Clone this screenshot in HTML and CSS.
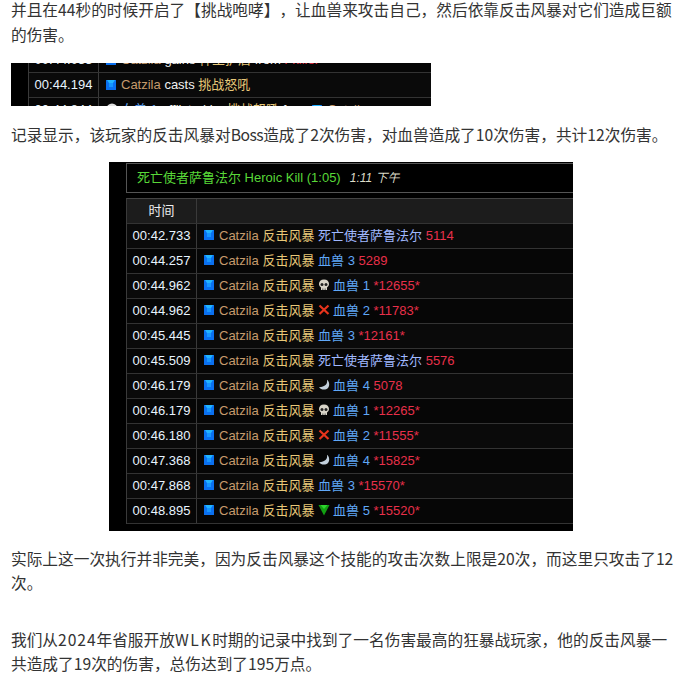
FILE: index.html
```html
<!DOCTYPE html>
<html lang="zh">
<head>
<meta charset="utf-8">
<title>反击风暴</title>
<link rel="stylesheet" href="styles.css">
</head>
<body>
<svg class="defs" width="0" height="0" aria-hidden="true">
  <symbol id="mark" viewBox="0 0 10 10"><rect width="10" height="10" fill="#0a70f0"/><path d="M1 0h8L7 3H3z" fill="#22b4ff"/><rect x="3" y="3" width="4" height="4" fill="#1496ff"/></symbol>
  <symbol id="skull" viewBox="0 0 12 12"><path d="M6 .5C2.800.5 1 2.500 1 5c0 1.600.8 2.800 2 3.400V11h6V8.400c1.200-.6 2-1.800 2-3.400C11 2.500 9.200.5 6 .5z" fill="#d8d4c8"/><circle cx="4" cy="5.500" r="1.500" fill="#222"/><circle cx="8" cy="5.500" r="1.500" fill="#222"/><path d="M4.500 9.500v1.500M6 9.500v1.500M7.500 9.500v1.500" stroke="#444" stroke-width=".6"/></symbol>
  <symbol id="cross" viewBox="0 0 12 12"><path d="M1.500 1.500l9 8.500M10.500 1.500l-9 8.500" stroke="#e8341c" stroke-width="2.200" fill="none"/></symbol>
  <symbol id="moon" viewBox="0 0 12 12"><path d="M9 .8C9.800 5 7 8 1 8.200 3 11 7.500 11.500 10 9c2-2.300 1.500-6.200-1-8.200z" fill="#c3d0dc"/></symbol>
  <symbol id="tri" viewBox="0 0 12 12"><path d="M.5 1h11L6 11.500z" fill="#12a012"/><path d="M2.500 1h7L6 5z" fill="#2fd62f"/></symbol>
  <symbol id="dot" viewBox="0 0 12 12"><circle cx="6" cy="6" r="5.500" fill="#e0e0e0"/></symbol>
</svg>
<main class="article">
  <p class="para">并且在44秒的时候开启了【挑战咆哮】，让血兽来攻击自己，然后依靠反击风暴对它们造成巨额的伤害。</p>

  <figure class="shot shot-small">
    <div class="log log-small">
      <div class="row">
        <div class="time">00:44.033</div>
        <div class="event"><svg class="mark"><use href="#mark"/></svg><span class="player">Catzila</span> <span class="plain">gains</span> <span class="spell">神圣护盾</span> <span class="plain">from</span> <span class="dmg">Fkiller</span></div>
      </div>
      <div class="row">
        <div class="time">00:44.194</div>
        <div class="event"><svg class="mark"><use href="#mark"/></svg><span class="player">Catzila</span> <span class="plain">casts</span> <span class="spell">挑战怒吼</span></div>
      </div>
      <div class="row">
        <div class="time">00:44.844</div>
        <div class="event"><svg class="raid"><use href="#dot"/></svg><span class="mob">血兽 1</span> <span class="plain">afflicted by</span> <span class="spell">挑战怒吼</span> <span class="plain">from</span> <svg class="mark"><use href="#mark"/></svg><span class="player">Catzila</span></div>
      </div>
    </div>
  </figure>

  <p class="para para-mid">记录显示，该玩家的反击风暴对<span class="tight">Boss</span>造成了2次伤害，对血兽造成了10次伤害，共计12次伤害。</p>

  <figure class="shot shot-large">
    <div class="log log-large">
      <div class="fight"><span class="fight-name">死亡使者萨鲁法尔 Heroic Kill (1:05)</span><em class="fight-time">1:11 下午</em></div>
      <div class="table">
        <div class="row row-head"><div class="time">时间</div><div class="event"></div></div>
        <div class="row"><div class="time">00:42.733</div><div class="event"><svg class="mark"><use href="#mark"/></svg><span class="player">Catzila</span> <span class="spell">反击风暴</span> <span class="boss">死亡使者萨鲁法尔</span> <span class="dmg">5114</span></div></div>
        <div class="row"><div class="time">00:44.257</div><div class="event"><svg class="mark"><use href="#mark"/></svg><span class="player">Catzila</span> <span class="spell">反击风暴</span> <span class="mob">血兽 3</span> <span class="dmg">5289</span></div></div>
        <div class="row"><div class="time">00:44.962</div><div class="event"><svg class="mark"><use href="#mark"/></svg><span class="player">Catzila</span> <span class="spell">反击风暴</span> <svg class="raid"><use href="#skull"/></svg><span class="mob">血兽 1</span> <span class="dmg">*12655*</span></div></div>
        <div class="row"><div class="time">00:44.962</div><div class="event"><svg class="mark"><use href="#mark"/></svg><span class="player">Catzila</span> <span class="spell">反击风暴</span> <svg class="raid"><use href="#cross"/></svg><span class="mob">血兽 2</span> <span class="dmg">*11783*</span></div></div>
        <div class="row"><div class="time">00:45.445</div><div class="event"><svg class="mark"><use href="#mark"/></svg><span class="player">Catzila</span> <span class="spell">反击风暴</span> <span class="mob">血兽 3</span> <span class="dmg">*12161*</span></div></div>
        <div class="row"><div class="time">00:45.509</div><div class="event"><svg class="mark"><use href="#mark"/></svg><span class="player">Catzila</span> <span class="spell">反击风暴</span> <span class="boss">死亡使者萨鲁法尔</span> <span class="dmg">5576</span></div></div>
        <div class="row"><div class="time">00:46.179</div><div class="event"><svg class="mark"><use href="#mark"/></svg><span class="player">Catzila</span> <span class="spell">反击风暴</span> <svg class="raid"><use href="#moon"/></svg><span class="mob">血兽 4</span> <span class="dmg">5078</span></div></div>
        <div class="row"><div class="time">00:46.179</div><div class="event"><svg class="mark"><use href="#mark"/></svg><span class="player">Catzila</span> <span class="spell">反击风暴</span> <svg class="raid"><use href="#skull"/></svg><span class="mob">血兽 1</span> <span class="dmg">*12265*</span></div></div>
        <div class="row"><div class="time">00:46.180</div><div class="event"><svg class="mark"><use href="#mark"/></svg><span class="player">Catzila</span> <span class="spell">反击风暴</span> <svg class="raid"><use href="#cross"/></svg><span class="mob">血兽 2</span> <span class="dmg">*11555*</span></div></div>
        <div class="row"><div class="time">00:47.368</div><div class="event"><svg class="mark"><use href="#mark"/></svg><span class="player">Catzila</span> <span class="spell">反击风暴</span> <svg class="raid"><use href="#moon"/></svg><span class="mob">血兽 4</span> <span class="dmg">*15825*</span></div></div>
        <div class="row"><div class="time">00:47.868</div><div class="event"><svg class="mark"><use href="#mark"/></svg><span class="player">Catzila</span> <span class="spell">反击风暴</span> <span class="mob">血兽 3</span> <span class="dmg">*15570*</span></div></div>
        <div class="row"><div class="time">00:48.895</div><div class="event"><svg class="mark"><use href="#mark"/></svg><span class="player">Catzila</span> <span class="spell">反击风暴</span> <svg class="raid"><use href="#tri"/></svg><span class="mob">血兽 5</span> <span class="dmg">*15520*</span></div></div>
      </div>
    </div>
  </figure>

  <p class="para para-after">实际上这一次执行并非完美，因为反击风暴这个技能的攻击次数上限是20次，而这里只攻击了12次。</p>
  <p class="para para-last">我们从<span class="wide-num">2024</span>年省服开放<span class="wide-lat">WLK</span>时期的记录中找到了一名伤害最高的狂暴战玩家，他的反击风暴一共造成了19次的伤害，总伤达到了195万点。</p>
</main>
</body>
</html>
```
FILE: styles.css
```css
* { box-sizing: border-box; }
html, body { margin: 0; padding: 0; background: #fff; }
body { height: 674px; overflow: hidden; }
.defs { position: absolute; }
.article {
  width: 675px;
  margin-top: -2px;
  padding: 0 0 0 11px;
  font-family: "Noto Sans CJK SC", "Liberation Sans", sans-serif;
  font-size: 15.7px;
  line-height: 24.5px;
  color: #333;
  text-spacing-trim: space-all;
}
.para { margin: 0; }
.tight { letter-spacing: -0.5px; }
.wide-num { letter-spacing: 0.9px; }
.wide-lat { letter-spacing: 1.6px; }
.shot { margin: 0; background: #000; overflow: hidden; }
.shot-small { width: 420px; height: 43px; margin-top: 16px; }
.para-mid { margin-top: 17px; }
.shot-large { width: 464px; height: 369px; margin: 14px 0 0 98px; padding-top: 1px; }
.para-after { margin-top: 16px; }
.para-last { margin-top: 32px; }

.log {
  font-family: "Liberation Sans", "Noto Sans CJK SC", sans-serif;
  font-size: 13px;
  line-height: 24px;
  color: #fff;
}
.log-small { margin: -15px 0 0 17px; border-left: 1px solid #3a3a3a; }
.log-large { padding-left: 17px; }
.fight {
  height: 30px;
  display: flex;
  align-items: center;
  gap: 9px;
  padding-left: 10px;
  border: 1px solid #555;
  border-right: 0;
}
.fight-name { color: #58d838; }
.fight-time { color: #dcdcc8; font-size: 12px; }
.table { margin-top: 5px; border-top: 1px solid #444; border-left: 1px solid #3a3a3a; }
.row { display: flex; height: 25px; background: #0a0a0a; border-bottom: 1px solid #333; }
.row:nth-child(odd) { background: #060606; }
.row.row-head { background: #1c1c1c; }
.row-head .time { color: #eee; }
.time { flex: 0 0 70px; text-align: center; border-right: 1px solid #3a3a3a; color: #e8f4ff; }
.event { flex: 1; padding-left: 7px; white-space: nowrap; min-width: 0; overflow: hidden; }
.mark { display: inline-block; width: 10px; height: 10px; margin: 0 5px 0 0; vertical-align: -0.5px; }
.raid { display: inline-block; width: 12px; height: 12px; margin: 0 3px 0 0; vertical-align: -1px; }
.player { color: #c69b6d; }
.spell { color: #e8c878; }
.boss { color: #a0b8ff; }
.mob { color: #60a8f8; }
.dmg { color: #e8304a; }
.plain { color: #f0f0f0; }
```
